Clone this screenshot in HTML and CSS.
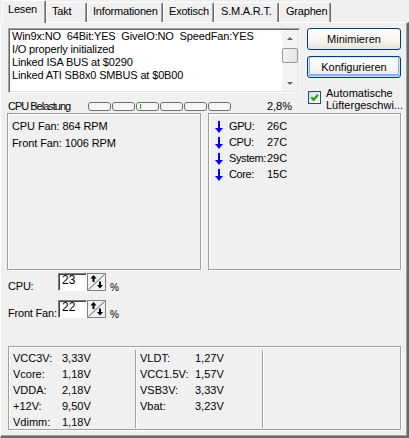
FILE: index.html
```html
<!DOCTYPE html>
<html lang="de">
<head>
<meta charset="utf-8">
<title>SpeedFan</title>
<link rel="stylesheet" href="styles.css">
</head>
<body>
<div class="window">
  <div class="tabs">
    <div class="tab tab-active tab-lesen">Lesen</div>
    <div class="tab tab-takt">Takt</div>
    <div class="tab tab-info">Informationen</div>
    <div class="tab tab-exot">Exotisch</div>
    <div class="tab tab-smart">S.M.A.R.T.</div>
    <div class="tab tab-graph">Graphen</div>
  </div>

  <div class="panel">
    <div class="top">
      <div class="left-col">
        <div class="log">
          <div class="log-text">
            <div class="log-line">Win9x:NO  64Bit:YES  GiveIO:NO  SpeedFan:YES</div>
            <div class="log-line">I/O properly initialized</div>
            <div class="log-line">Linked ISA BUS at $0290</div>
            <div class="log-line">Linked ATI SB8x0 SMBUS at $0B00</div>
          </div>
          <div class="scrollbar">
            <div class="sb-arrow sb-up"></div>
            <div class="sb-track"><div class="sb-thumb"></div></div>
            <div class="sb-arrow sb-down"></div>
          </div>
        </div>
        <div class="load-row">
          <span class="load-label">CPU Belastung</span>
          <div class="cells">
            <div class="cell"></div>
            <div class="cell"></div>
            <div class="cell"><span class="cell-mark"></span></div>
            <div class="cell"></div>
            <div class="cell"></div>
            <div class="cell"></div>
          </div>
          <span class="load-value">2,8%</span>
        </div>
      </div>

      <div class="right-col">
        <button class="btn">Minimieren</button>
        <button class="btn btn-default">Konfigurieren</button>
        <label class="check">
          <span class="check-box">
            <svg width="11" height="11" viewBox="0 0 11 11"><path d="M2.2 5.2 L4.6 7.8 L9 2.8" fill="none" stroke="#21a121" stroke-width="2.2"/></svg>
          </span>
          <span class="check-label">Automatische<br>Lüftergeschwi...</span>
        </label>
      </div>
    </div>

    <div class="mid">
      <div class="box fans">
        <div>CPU Fan: 864 RPM</div>
        <div>Front Fan: 1006 RPM</div>
      </div>
      <div class="box temps">
        <div class="temp-row">
          <svg class="arrow" width="8" height="12" viewBox="0 0 8 12"><path d="M3 0h2v7h3l-4 5-4-5h3z" fill="#0000ff"/></svg>
          <span class="temp-name">GPU:</span><span>26C</span>
        </div>
        <div class="temp-row">
          <svg class="arrow" width="8" height="12" viewBox="0 0 8 12"><path d="M3 0h2v7h3l-4 5-4-5h3z" fill="#0000ff"/></svg>
          <span class="temp-name">CPU:</span><span>27C</span>
        </div>
        <div class="temp-row">
          <svg class="arrow" width="8" height="12" viewBox="0 0 8 12"><path d="M3 0h2v7h3l-4 5-4-5h3z" fill="#0000ff"/></svg>
          <span class="temp-name">System:</span><span>29C</span>
        </div>
        <div class="temp-row">
          <svg class="arrow" width="8" height="12" viewBox="0 0 8 12"><path d="M3 0h2v7h3l-4 5-4-5h3z" fill="#0000ff"/></svg>
          <span class="temp-name">Core:</span><span>15C</span>
        </div>
      </div>
    </div>

    <div class="speeds">
      <div class="speed-row">
        <span class="speed-label">CPU:</span>
        <span class="edit">23</span>
        <svg class="spin" width="19" height="18" viewBox="0 0 19 18">
          <rect x="0.5" y="0.5" width="18" height="17" fill="#f0f0f0" stroke="#808080"/>
          <path d="M1.5 16.5 L17.5 1.5" stroke="#606060" stroke-width="1"/>
          <path d="M6.5 2 L9.5 5.5 H7.5 V9 H5.5 V5.5 H3.5 Z" fill="#000"/>
          <path d="M13 15.5 L16 12 H14 V8.5 H12 V12 H10 Z" fill="#000"/>
        </svg>
        <span class="pct">%</span>
      </div>
      <div class="speed-row">
        <span class="speed-label">Front Fan:</span>
        <span class="edit">22</span>
        <svg class="spin" width="19" height="18" viewBox="0 0 19 18">
          <rect x="0.5" y="0.5" width="18" height="17" fill="#f0f0f0" stroke="#808080"/>
          <path d="M1.5 16.5 L17.5 1.5" stroke="#606060" stroke-width="1"/>
          <path d="M6.5 2 L9.5 5.5 H7.5 V9 H5.5 V5.5 H3.5 Z" fill="#000"/>
          <path d="M13 15.5 L16 12 H14 V8.5 H12 V12 H10 Z" fill="#000"/>
        </svg>
        <span class="pct">%</span>
      </div>
    </div>

    <div class="volts">
      <div class="volt-col">
        <div class="volt-row"><span class="volt-name">VCC3V:</span><span>3,33V</span></div>
        <div class="volt-row"><span class="volt-name">Vcore:</span><span>1,18V</span></div>
        <div class="volt-row"><span class="volt-name">VDDA:</span><span>2,18V</span></div>
        <div class="volt-row"><span class="volt-name">+12V:</span><span>9,50V</span></div>
        <div class="volt-row"><span class="volt-name">Vdimm:</span><span>1,18V</span></div>
      </div>
      <div class="volt-col">
        <div class="volt-row"><span class="volt-name">VLDT:</span><span>1,27V</span></div>
        <div class="volt-row"><span class="volt-name">VCC1.5V:</span><span>1,57V</span></div>
        <div class="volt-row"><span class="volt-name">VSB3V:</span><span>3,33V</span></div>
        <div class="volt-row"><span class="volt-name">Vbat:</span><span>3,23V</span></div>
      </div>
      <div class="volt-col volt-col-last"></div>
    </div>
  </div>
</div>
</body>
</html>
```

FILE: styles.css
```css
* {
  box-sizing: border-box;
}

html, body {
  margin: 0;
  padding: 0;
  background: #f0f0f0;
}

body {
  font-family: "Liberation Sans", Arial, sans-serif;
  font-size: 11px;
  line-height: 13px;
  color: #000;
}

.window {
  width: 409px;
  height: 438px;
  display: flex;
  flex-direction: column;
  overflow: hidden;
}

/* ---- tab strip ---- */
.tabs {
  height: 22px;
  display: flex;
  align-items: flex-end;
  padding-left: 2px;
  flex: none;
}

.tab {
  flex: none;
  height: 20px;
  padding: 2px 0 0 5px;
  border-top: 1px solid #fff;
  border-left: 1px solid #fff;
  border-right: 1px solid #696969;
  box-shadow: inset -1px 0 0 #a0a0a0;
  border-radius: 2px 2px 0 0;
  white-space: nowrap;
  background: #f0f0f0;
  letter-spacing: -0.2px;
}

.tab-active {
  height: 23px;
  margin-bottom: -1px;
  padding-left: 5px;
  position: relative;
  z-index: 1;
}

.tab-lesen { width: 44px; }
.tab-takt { width: 41px; }
.tab-info { width: 76px; }
.tab-exot { width: 51px; }
.tab-smart { width: 65px; padding-left: 6px; }
.tab-graph { width: 52px; padding-left: 6px; }

/* ---- page body ---- */
.panel {
  flex: 1;
  border-top: 1px solid #fff;
  border-left: 1px solid #fff;
  border-right: 2px solid #696969;
  border-bottom: 2px solid #696969;
  box-shadow: inset -1px -1px 0 #a0a0a0;
  padding: 5px 0 0 6px;
}

.top {
  display: grid;
  grid-template-columns: 292px 94px;
  column-gap: 7px;
  margin-left: 1px;
}

.left-col {
  display: flex;
  flex-direction: column;
}

.log {
  height: 65px;
  display: flex;
  background: #fff;
  border-top: 1px solid #a0a0a0;
  border-left: 1px solid #a0a0a0;
  border-right: 1px solid #fff;
  border-bottom: 1px solid #fff;
  box-shadow: inset 1px 1px 0 #696969, inset -1px -1px 0 #e3e3e3;
  padding: 1px;
}

.log-text {
  flex: 1;
  padding-left: 2px;
  overflow: hidden;
  letter-spacing: -0.15px;
}

.log-line {
  white-space: pre;
}

.scrollbar {
  width: 16px;
  flex: none;
  display: flex;
  flex-direction: column;
  background: #f4f4f4;
}

.sb-arrow {
  height: 16px;
  flex: none;
  position: relative;
}

.sb-up::after,
.sb-down::after {
  content: "";
  position: absolute;
  left: 5px;
  top: 7px;
  border-left: 3.5px solid transparent;
  border-right: 3.5px solid transparent;
}

.sb-up::after {
  border-bottom: 3px solid #606060;
}

.sb-down::after {
  border-top: 3px solid #606060;
}

.sb-track {
  flex: 1;
  padding-top: 2px;
}

.sb-thumb {
  height: 15px;
  border: 1px solid #979797;
  border-radius: 2px;
  background: linear-gradient(to right, #f3f3f3, #e4e4e4);
}

.load-row {
  height: 12px;
  margin-top: 7px;
  display: flex;
  align-items: center;
}

.load-label {
  flex: none;
  width: 80px;
  line-height: 12px;
  white-space: nowrap;
  letter-spacing: -1px;
}

.cells {
  flex: none;
  display: flex;
  gap: 1px;
}

.cell {
  flex: none;
  width: 23px;
  height: 9px;
  border: 1px solid #707070;
  border-radius: 3px;
  background: #f7f7f7;
  position: relative;
}

.cell-mark {
  position: absolute;
  left: 3px;
  top: 1px;
  width: 1px;
  height: 5px;
  background: #00cc00;
}

.load-value {
  margin-left: auto;
  padding-right: 8px;
  line-height: 12px;
}

.right-col {
  display: flex;
  flex-direction: column;
}

.btn {
  height: 22px;
  width: 94px;
  font: inherit;
  color: #000;
  border: 1px solid #003c74;
  border-radius: 3px;
  background: linear-gradient(to bottom, #ffffff 0%, #f6f5f1 60%, #e6e3da 100%);
  padding: 0;
  line-height: 13px;
}

.btn + .btn {
  margin-top: 6px;
}

.btn-default {
  box-shadow: inset 0 0 0 1px #cee7ff, inset 0 -1px 0 2px #89adf0;
}

.check {
  display: flex;
  align-items: flex-start;
  margin-top: 9px;
  margin-left: 1px;
}

.check-box {
  width: 13px;
  height: 13px;
  margin-top: 4px;
  border: 1px solid #1c5180;
  background: linear-gradient(135deg, #dcdcd7, #ffffff);
  display: flex;
  align-items: center;
  justify-content: center;
  flex: none;
}

.check-label {
  margin-left: 5px;
  line-height: 12px;
  white-space: nowrap;
}

/* ---- sensor boxes ---- */
.mid {
  display: flex;
  gap: 7px;
  margin-top: 1px;
}

.box {
  flex: none;
  height: 157px;
  border: 1px solid #a0a0a0;
  box-shadow: 1px 1px 0 #fff, inset 1px 1px 0 #fff;
}

.fans {
  width: 194px;
  padding: 4px 0 0 4px;
  line-height: 17px;
  letter-spacing: -0.1px;
}

.temps {
  width: 193px;
  padding: 4px 0 0 6px;
  line-height: 16px;
}

.temp-row {
  display: flex;
  align-items: center;
  white-space: nowrap;
}

.arrow {
  flex: none;
  margin-right: 6px;
  margin-top: 2px;
}

.temp-name {
  flex: none;
  width: 38px;
  letter-spacing: -0.4px;
}

/* ---- fan speed spinners ---- */
.speeds {
  margin-top: 3px;
  margin-left: 1px;
  display: flex;
  flex-direction: column;
  gap: 9px;
}

.speed-row {
  display: flex;
  align-items: flex-start;
  height: 18px;
}

.speed-label {
  flex: none;
  width: 50px;
  padding-top: 7px;
  white-space: nowrap;
  letter-spacing: -0.2px;
}

.edit {
  flex: none;
  width: 29px;
  height: 18px;
  background: #fff;
  border-top: 1px solid #808080;
  border-left: 1px solid #808080;
  border-right: 1px solid #fff;
  border-bottom: 1px solid #fff;
  box-shadow: inset 1px 1px 0 #404040;
  padding: 0 0 0 3px;
  line-height: 12px;
  font-size: 12px;
}

.spin {
  flex: none;
}

.pct {
  margin-left: 4px;
  padding-top: 8px;
  font-size: 10px;
}

/* ---- voltages ---- */
.volts {
  margin-top: 28px;
  margin-left: 1px;
  width: 393px;
  height: 84px;
  border: 1px solid #a0a0a0;
  box-shadow: 1px 1px 0 #fff, inset 1px 1px 0 #fff;
  padding: 3px 0 1px 0;
  display: flex;
}

.volt-col {
  flex: none;
  width: 127px;
  border-right: 1px solid #a0a0a0;
  box-shadow: 1px 0 0 #fff;
  padding-left: 4px;
  line-height: 16px;
}

.volt-col-last {
  flex: 1;
  border-right: none;
  box-shadow: none;
}

.volt-row {
  display: flex;
  white-space: nowrap;
}

.volt-name {
  width: 49px;
}

.volt-col + .volt-col .volt-name {
  width: 55px;
}
```
